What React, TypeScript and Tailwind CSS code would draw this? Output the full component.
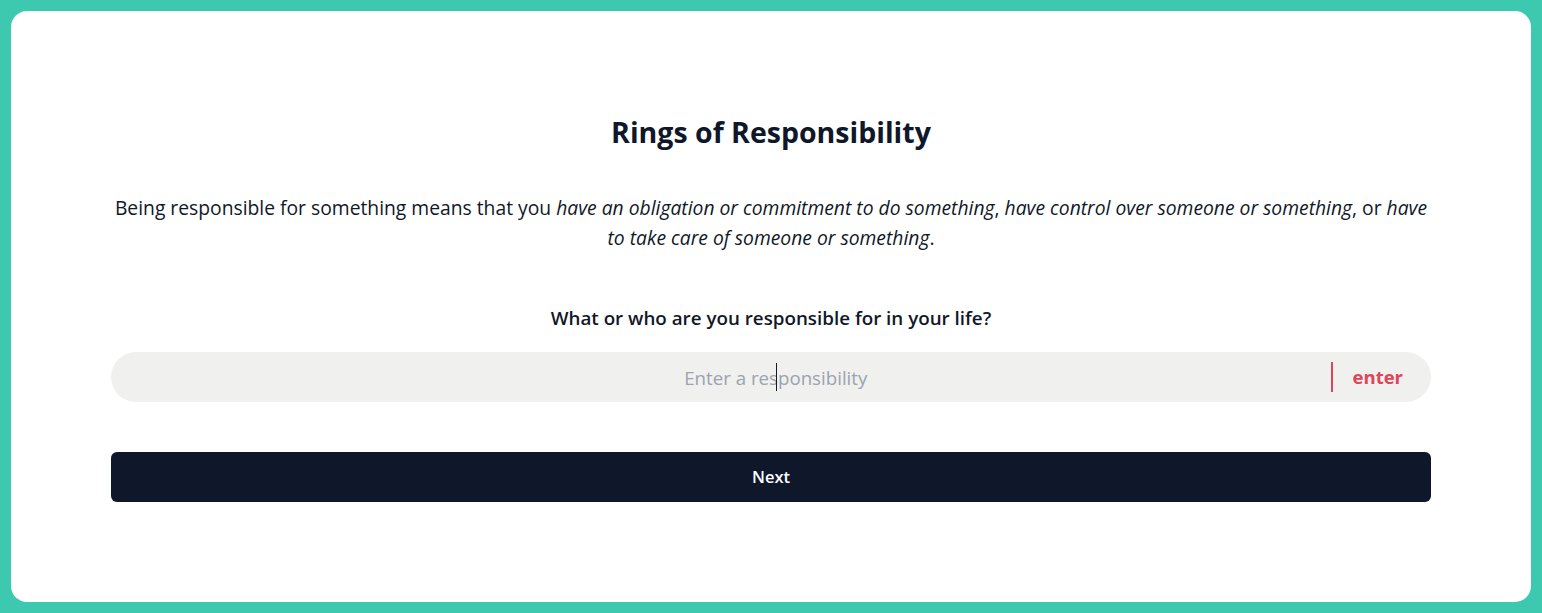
import React, { useState } from 'react';

const App: React.FC = () => {
  const [value, setValue] = useState('');

  return (
    <div
      className="min-h-[613px] w-full bg-[#3cc9af] p-[11px]"
      style={{ fontFamily: '"Open Sans", "Noto Sans", sans-serif' }}
    >
      <div className="flex h-[591px] flex-col items-center rounded-2xl bg-white px-[100px] pt-[101px]">
        <h1 className="text-[28.5px] font-bold leading-[40px] text-[#0f172a]">Rings of Responsibility</h1>

        <p className="mt-[41px] text-center text-[19.3px] leading-[30px] text-[#111827]">
          Being responsible for something means that you{' '}
          <em>have an obligation or commitment to do something</em>,{' '}
          <em>have control over someone or something</em>, or{' '}
          <em>have to take care of someone or something</em>.
        </p>

        <h2 className="mt-[50px] text-[18.8px] font-semibold leading-[30px] text-[#111827]">
          What or who are you responsible for in your life?
        </h2>

        <div className="relative mt-[19px] flex h-[50px] w-full items-center rounded-full bg-[#f0f0ee]">
          <input
            value={value}
            onChange={(e) => setValue(e.target.value)}
            placeholder="Enter a responsibility"
            className="h-full flex-1 bg-transparent pl-[110px] text-center text-[18.7px] text-[#111827] outline-none placeholder:text-[#9ca3af]"
          />
          {value === '' && (
            <span className="pointer-events-none absolute left-[665px] top-[11px] h-[28px] w-px bg-[#111827]" />
          )}
          <div className="flex h-full items-center pr-[28px]">
            <span className="h-[30px] w-[2px] bg-[#dc4658]" />
            <button className="ml-[20px] text-[18.5px] font-bold text-[#dc4658]">enter</button>
          </div>
        </div>

        <button className="mt-[50px] h-[50px] w-full rounded-md bg-[#0f172a] text-[16.5px] font-semibold text-white">
          Next
        </button>
      </div>
    </div>
  );
};

export default App;
